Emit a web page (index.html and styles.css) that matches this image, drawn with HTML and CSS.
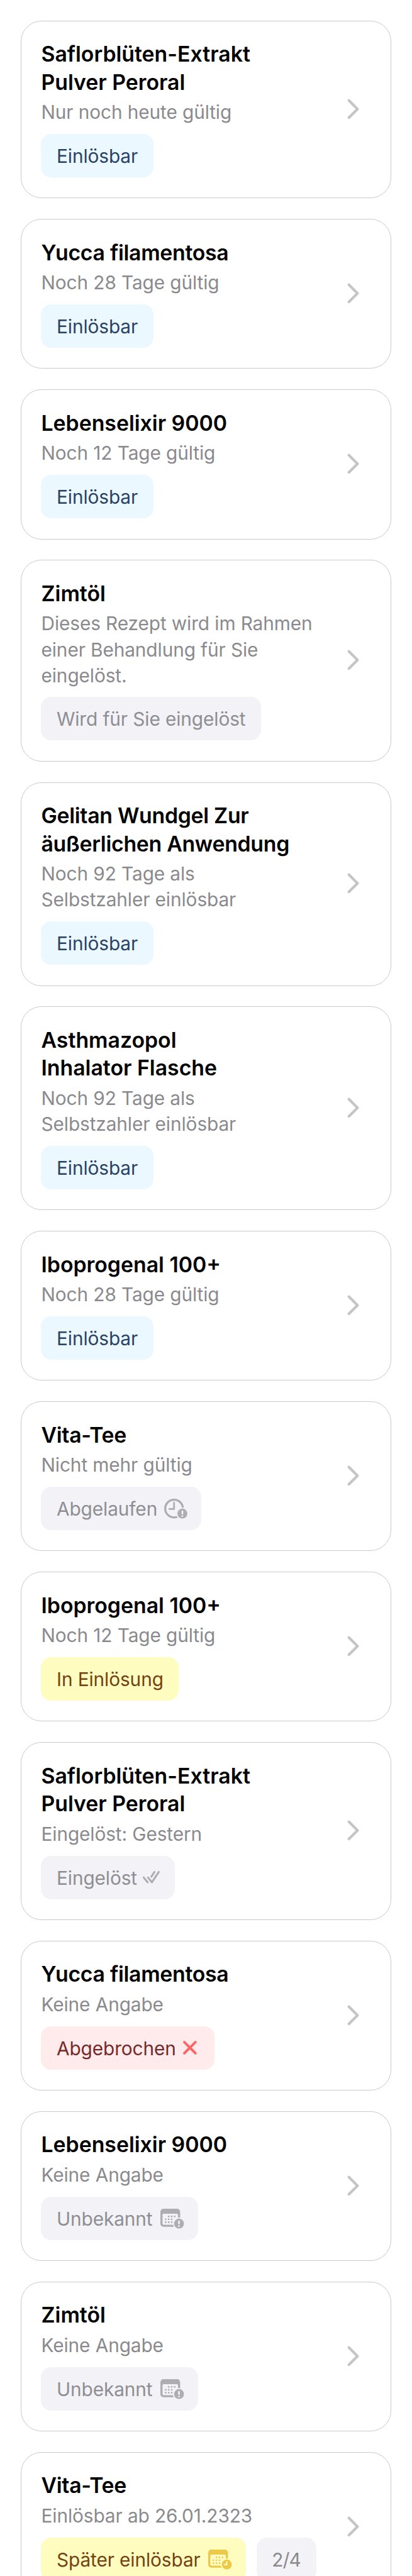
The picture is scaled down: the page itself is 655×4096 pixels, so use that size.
FILE: index.html
```
<!DOCTYPE html>
<html lang="de">
<head>
<meta charset="utf-8">
<title>Rezepte</title>
<link rel="stylesheet" href="styles.css">
</head>
<body>
<svg class="defs" aria-hidden="true">
  <symbol id="chevron" viewBox="0 0 28 48"><path d="M4 4 L24 24 L4 44"/></symbol>
  <symbol id="calendar" viewBox="0 0 56 47">
    <path fill="currentColor" fill-rule="evenodd" d="M7 0H39a7 7 0 0 1 7 7V35a7 7 0 0 1-7 7H7a7 7 0 0 1-7-7V7a7 7 0 0 1 7-7Z M7.500 11.700a2.500 2.500 0 0 0-2.500 2.500V34.500a2.700 2.700 0 0 0 2.700 2.700H38.300a2.700 2.700 0 0 0 2.700-2.700V14.200a2.500 2.500 0 0 0-2.500-2.500Z"/>
    <path fill="currentColor" d="M17.500 16h3.600v3.600h-3.600zM24.500 16h3.600v3.600h-3.600zM31.500 16h3.600v3.600h-3.600zM10.500 22.900h3.600v3.600h-3.600zM17.500 22.900h3.600v3.600h-3.600zM24.500 22.900h3.600v3.600h-3.600zM10.500 29.800h3.600v3.600h-3.600zM17.500 29.800h3.600v3.600h-3.600zM24.500 29.800h3.600v3.600h-3.600z"/>
    <circle class="halo" cx="43.400" cy="34.700" r="14.300"/>
    <circle fill="currentColor" cx="43.400" cy="34.700" r="11.500"/>
  </symbol>
</svg>
<main class="list">
  <article class="card"><div class="info"><h2>Saflorblüten-Extrakt<br>Pulver Peroral</h2><p>Nur noch heute gültig</p><div class="tags"><span class="tag blue">Einlösbar</span></div></div><svg class="chevron"><use href="#chevron"/></svg></article>
  <article class="card"><div class="info"><h2 class="tight">Yucca filamentosa</h2><p>Noch 28 Tage gültig</p><div class="tags"><span class="tag blue">Einlösbar</span></div></div><svg class="chevron"><use href="#chevron"/></svg></article>
  <article class="card"><div class="info"><h2>Lebenselixir 9000</h2><p>Noch 12 Tage gültig</p><div class="tags"><span class="tag blue">Einlösbar</span></div></div><svg class="chevron"><use href="#chevron"/></svg></article>
  <article class="card"><div class="info"><h2>Zimtöl</h2><p>Dieses Rezept wird im Rahmen<br>einer Behandlung für Sie<br>eingelöst.</p><div class="tags"><span class="tag gray">Wird für Sie eingelöst</span></div></div><svg class="chevron"><use href="#chevron"/></svg></article>
  <article class="card"><div class="info"><h2 class="tight">Gelitan Wundgel Zur<br>äußerlichen Anwendung</h2><p>Noch 92 Tage als<br>Selbstzahler einlösbar</p><div class="tags"><span class="tag blue">Einlösbar</span></div></div><svg class="chevron"><use href="#chevron"/></svg></article>
  <article class="card"><div class="info"><h2>Asthmazopol<br>Inhalator Flasche</h2><p>Noch 92 Tage als<br>Selbstzahler einlösbar</p><div class="tags"><span class="tag blue">Einlösbar</span></div></div><svg class="chevron"><use href="#chevron"/></svg></article>
  <article class="card"><div class="info"><h2>Iboprogenal 100+</h2><p>Noch 28 Tage gültig</p><div class="tags"><span class="tag blue">Einlösbar</span></div></div><svg class="chevron"><use href="#chevron"/></svg></article>
  <article class="card"><div class="info"><h2 class="tight">Vita-Tee</h2><p>Nicht mehr gültig</p><div class="tags"><span class="tag gray">Abgelaufen<svg class="icon clock" viewBox="0 0 54 47"><circle cx="23" cy="23" r="20.600" fill="none" stroke="currentColor" stroke-width="4.800"/><path d="M23 9.500V24H12" fill="none" stroke="currentColor" stroke-width="4" stroke-linecap="round" stroke-linejoin="round"/><circle class="halo" cx="42.400" cy="34.700" r="14.300"/><circle fill="currentColor" cx="42.400" cy="34.700" r="11.500"/><path class="cut" d="M42.400 29.500v5.200"/><circle class="halo" cx="42.400" cy="40.400" r="2"/></svg></span></div></div><svg class="chevron"><use href="#chevron"/></svg></article>
  <article class="card"><div class="info"><h2>Iboprogenal 100+</h2><p>Noch 12 Tage gültig</p><div class="tags"><span class="tag yellow">In Einlösung</span></div></div><svg class="chevron"><use href="#chevron"/></svg></article>
  <article class="card"><div class="info"><h2>Saflorblüten-Extrakt<br>Pulver Peroral</h2><p>Eingelöst: Gestern</p><div class="tags"><span class="tag gray">Eingelöst<svg class="icon checks" viewBox="0 0 40 29"><path d="M2.200 15.200L11.200 26.300M12.200 15.200L21.300 26.300L37.300 2.200M27.200 2.200L19.900 13.200" fill="none" stroke="currentColor" stroke-width="4.600" stroke-linecap="round" stroke-linejoin="round"/></svg></span></div></div><svg class="chevron"><use href="#chevron"/></svg></article>
  <article class="card"><div class="info"><h2 class="tight">Yucca filamentosa</h2><p>Keine Angabe</p><div class="tags"><span class="tag red">Abgebrochen<svg class="icon cross" viewBox="0 0 32 32"><path d="M3 3L29 29M29 3L3 29" fill="none" stroke="currentColor" stroke-width="5.800" stroke-linecap="round"/></svg></span></div></div><svg class="chevron"><use href="#chevron"/></svg></article>
  <article class="card"><div class="info"><h2>Lebenselixir 9000</h2><p>Keine Angabe</p><div class="tags"><span class="tag gray">Unbekannt<svg class="icon calendar" viewBox="0 0 56 47"><use href="#calendar"/><path class="cut" d="M43.400 29.500v5.200"/><circle class="halo" cx="43.400" cy="40.400" r="2"/></svg></span></div></div><svg class="chevron"><use href="#chevron"/></svg></article>
  <article class="card"><div class="info"><h2>Zimtöl</h2><p>Keine Angabe</p><div class="tags"><span class="tag gray">Unbekannt<svg class="icon calendar" viewBox="0 0 56 47"><use href="#calendar"/><path class="cut" d="M43.400 29.500v5.200"/><circle class="halo" cx="43.400" cy="40.400" r="2"/></svg></span></div></div><svg class="chevron"><use href="#chevron"/></svg></article>
  <article class="card"><div class="info"><h2 class="tight">Vita-Tee</h2><p>Einlösbar ab 26.01.2323</p><div class="tags"><span class="tag yellow">Später einlösbar<svg class="icon calendar" viewBox="0 0 56 47"><use href="#calendar"/><path class="cut thin" d="M43.400 28.500v6.500h-5.500"/></svg></span><span class="tag gray count">2/4</span></div></div><svg class="chevron"><use href="#chevron"/></svg></article>
</main>
</body>
</html>
```
FILE: styles.css
```
* { box-sizing: border-box; }

html, body {
  margin: 0;
  height: 4096px;
  overflow: hidden;
  background: #fff;
}

body {
  font-family: Inter, "Noto Sans", sans-serif;
  color: #000;
}

.defs {
  display: none;
}

.list {
  display: flex;
  flex-direction: column;
  gap: 32.9px;
  padding: 32.7px 32.7px 0;
}

.card {
  display: flex;
  flex: none;
  align-items: center;
  justify-content: space-between;
  padding: 30.4px 50px 32.4px 31.8px;
  border: 1px solid #cacacc;
  border-radius: 32.8px;
}

.info { flex: none; }

h2 {
  margin: 0;
  font-size: 33.8px;
  line-height: 44.6px;
  font-weight: 600;
  white-space: nowrap;
}

.tight { letter-spacing: -0.28px; }

p {
  margin: 5px 0 13.7px;
  font-size: 29.8px;
  line-height: 41.1px;
  letter-spacing: -0.1px;
  color: #8a8a8e;
  white-space: nowrap;
}

.tags {
  display: flex;
  gap: 16.6px;
}

.tag {
  display: flex;
  align-items: center;
  height: 69px;
  padding: 1px 24.5px 0;
  border-radius: 16.4px;
  font-size: 29.8px;
  letter-spacing: -0.1px;
  white-space: nowrap;
}

.blue { --tag: #ebf8ff; background: var(--tag); color: #2a4365; }
.gray { --tag: #f2f2f7; background: var(--tag); color: #8e8e93; }
.yellow { --tag: #fefcbf; background: var(--tag); color: #744210; }
.red { --tag: #ffebeb; background: var(--tag); color: #742a2a; }
.count { color: #8a8a8e; letter-spacing: -0.8px; }

.icon {
  flex: none;
  display: block;
  overflow: visible;
}

.gray .icon { color: #aeaeb2; }
.yellow .icon { color: #ecc94b; }
.red .icon { color: #fc6666; }

.clock { width: 36.9px; height: 32.1px; margin: 0 -2.8px 0 11.2px; }
.checks { width: 27.3px; height: 19.8px; margin: -1.5px 0 0 8.6px; }
.cross { width: 21.8px; height: 21.8px; margin: -1px 3.4px 0 11.4px; }
.calendar { width: 38.2px; height: 32.1px; margin: 0 -2.2px 0 12px; }

.halo { fill: var(--tag); }

.cut {
  fill: none;
  stroke: var(--tag);
  stroke-width: 3.8;
  stroke-linecap: round;
  stroke-linejoin: round;
}

.thin { stroke-width: 3; }

.chevron {
  flex: none;
  width: 19.1px;
  height: 32.8px;
  fill: none;
  stroke: #c5c5c7;
  stroke-width: 6.2;
  stroke-linecap: round;
  stroke-linejoin: round;
}
```
